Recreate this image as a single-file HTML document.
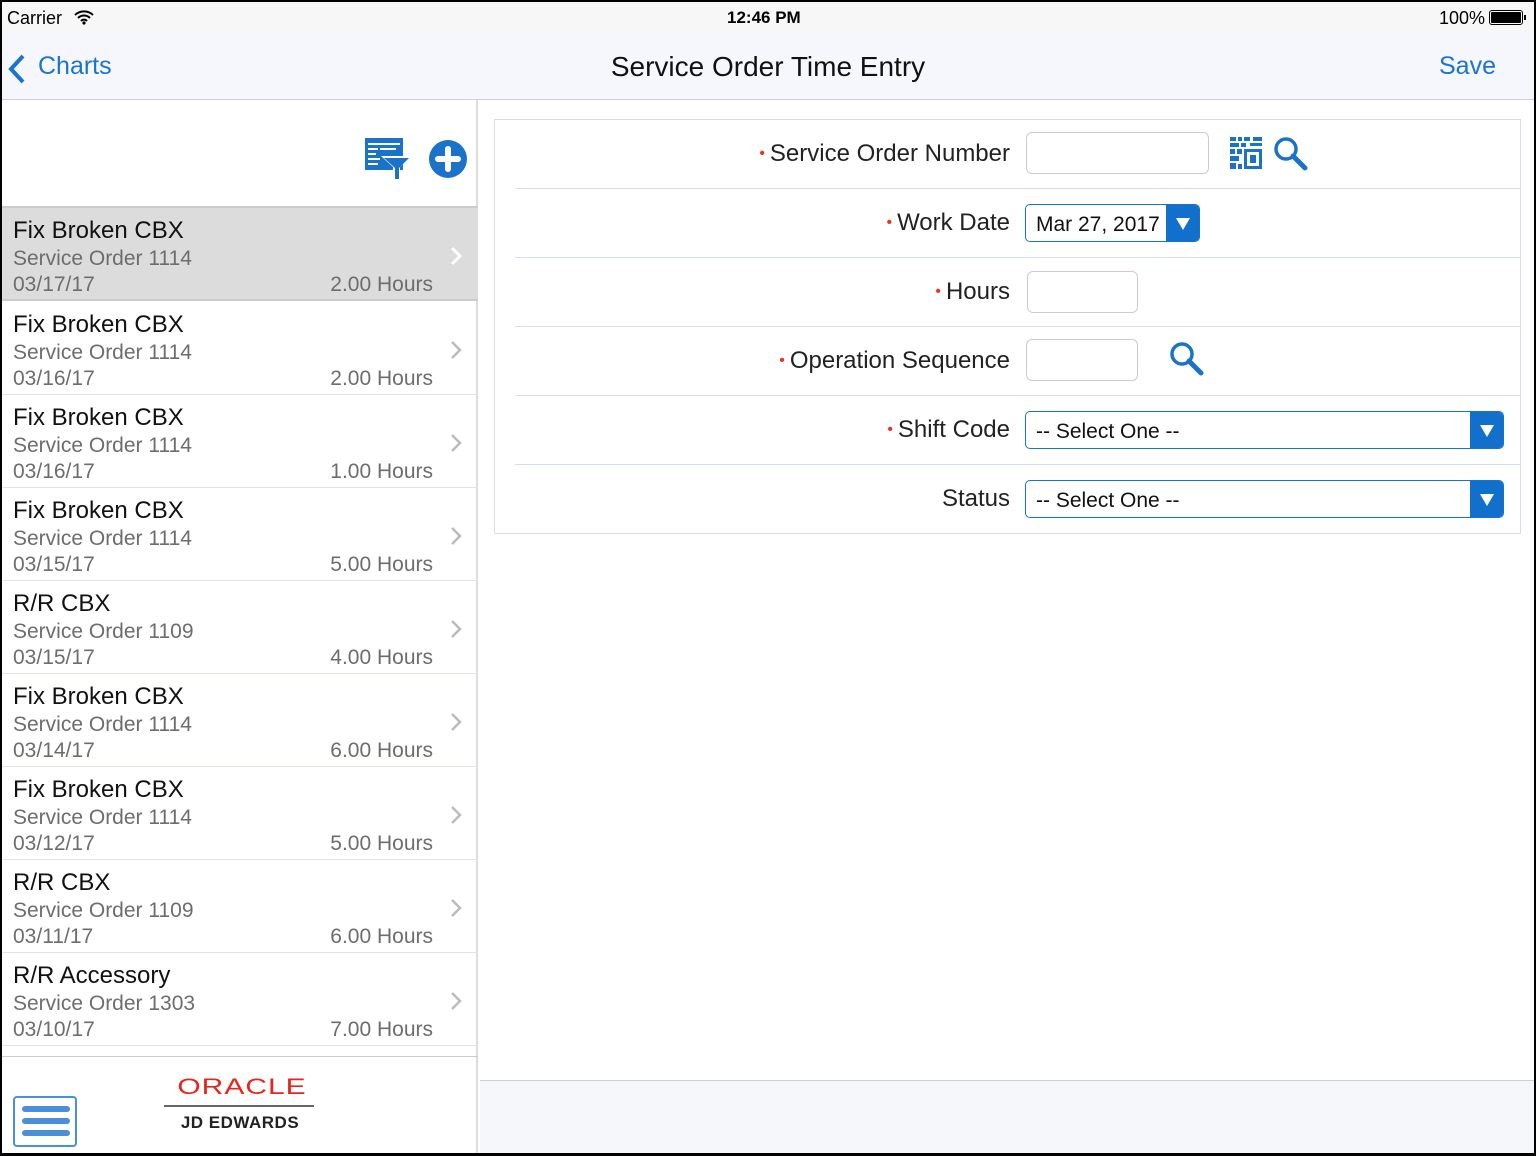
<!DOCTYPE html>
<html><head><meta charset="utf-8"><style>
*{margin:0;padding:0;box-sizing:border-box}
body{width:1536px;height:1156px;background:#000;font-family:"Liberation Sans",sans-serif;position:relative;overflow:hidden}
.scr{position:absolute;left:2px;top:2px;width:1532px;height:1151px;background:#fff;overflow:hidden}
.status{position:absolute;left:0;top:0;width:100%;height:30px;background:#f7f7f7;font-size:18px;color:#000}
.nav{position:absolute;left:0;top:30px;width:100%;height:68px;background:#f5f7fc;border-bottom:1px solid #d0d0d0}
.left{position:absolute;left:0;top:98px;width:476px;height:1053px;border-right:2px solid #ddd;background:#fff}
.row{position:absolute;left:0;width:476px;height:93px;border-bottom:1px solid #dde3ea}
.row .t{position:absolute;left:11px;top:9px;font-size:24px;color:#111}
.row .s{position:absolute;left:11px;top:39px;font-size:21px;color:#6d6d6d}
.row .d{position:absolute;left:11px;top:65px;font-size:21px;color:#6d6d6d}
.row .h{position:absolute;right:45px;top:65px;font-size:21px;color:#6d6d6d}
.row svg{position:absolute;right:16px;top:38px}
.form{position:absolute;left:492px;top:117px;width:1027px;height:415px;border:1px solid #d6dde6}
.fr{position:absolute;left:20px;width:1006px;height:69px;border-bottom:1px solid #d4dde8}
.lab{position:absolute;right:511px;top:20px;font-size:24px;color:#222;white-space:nowrap}
.lab b{color:#e32;font-weight:normal;font-size:16px;margin-right:5px;vertical-align:3px}
.inp{position:absolute;left:511px;border:1px solid #ccc;border-radius:6px;height:42px}
.sel{position:absolute;left:510px;height:38px;border:1px solid #1a73c8;border-radius:5px;font-size:21px;color:#111;padding:8px 10px;overflow:hidden}
.sel .ar{position:absolute;right:0;top:0;width:33px;height:100%;background:#1170cc}
.sel .ar:after{content:"";position:absolute;left:10px;top:13px;border-left:7px solid transparent;border-right:7px solid transparent;border-top:12px solid #fff}
</style></head><body><div class="scr">
<div class="status"><span style="position:absolute;left:5px;top:6px">Carrier</span>
<svg style="position:absolute;left:72px;top:8px" width="20" height="15" viewBox="0 0 20 15"><path d="M1 5a13 13 0 0 1 18 0M4 8a8.5 8.5 0 0 1 12 0M7 11a4 4 0 0 1 6 0" stroke="#000" stroke-width="2" fill="none"/><circle cx="10" cy="13" r="1.6"/></svg>
<span style="position:absolute;left:725px;top:6px;font-weight:bold;font-size:17px">12:46 PM</span>
<span style="position:absolute;left:1437px;top:6px">100%</span>
<div style="position:absolute;left:1487px;top:8px;width:34px;height:15px;border:1px solid #000;border-radius:3px;padding:1px"><div style="width:100%;height:100%;background:#000;border-radius:1px"></div></div><div style="position:absolute;left:1522px;top:13px;width:2px;height:5px;background:#000"></div></div>
<div class="nav"><svg style="position:absolute;left:6px;top:22px" width="18" height="30" viewBox="0 0 18 30"><path d="M15 2L3 15l12 13" stroke="#1a74d0" stroke-width="4" fill="none"/></svg>
<span style="position:absolute;left:36px;top:20px;font-size:25px;color:#1a74d0">Charts</span>
<span style="position:absolute;left:0;width:1532px;text-align:center;top:19px;font-size:28px;color:#111">Service Order Time Entry</span>
<span style="position:absolute;left:1437px;top:20px;font-size:25px;color:#1a74d0">Save</span></div>
<div class="left">
<svg style="position:absolute;left:362px;top:37px" width="48" height="44" viewBox="0 0 48 44"><rect x="1" y="1" width="38" height="32" fill="#1a73c8"/><g fill="#fff"><rect x="4" y="6" width="32" height="2"/><rect x="4" y="11" width="10" height="2"/><rect x="16" y="11" width="16" height="2"/><rect x="4" y="16" width="8" height="2"/><rect x="4" y="21" width="12" height="2"/><rect x="4" y="26" width="10" height="2"/></g><path d="M17 19h30l-11 11v13h-7V30z" fill="#fff"/><path d="M20 21h25l-10 10v11h-4V31z" fill="#1a73c8"/></svg>
<svg style="position:absolute;left:427px;top:40px" width="38" height="38" viewBox="0 0 38 38"><circle cx="19" cy="19" r="19" fill="#1a73c8"/><path d="M19 9v20M9 19h20" stroke="#fff" stroke-width="6" stroke-linecap="round"/></svg>
<div style="position:absolute;left:0;top:106px;width:476px;height:2px;background:#ccc"></div>
<div class="row" style="top:108px;height:93px;background:#dcdcdc;border-bottom:2px solid #ccc"><div class="t">Fix Broken CBX</div><div class="s">Service Order 1114</div><div class="d">03/17/17</div><div class="h">2.00 Hours</div><svg width="12" height="20" viewBox="0 0 12 20"><path d="M2 2l8 8-8 8" stroke="#fff" stroke-width="3" fill="none"/></svg></div>
<div class="row" style="top:202px"><div class="t">Fix Broken CBX</div><div class="s">Service Order 1114</div><div class="d">03/16/17</div><div class="h">2.00 Hours</div><svg width="12" height="20" viewBox="0 0 12 20"><path d="M2 2l8 8-8 8" stroke="#bbb" stroke-width="2.5" fill="none"/></svg></div>
<div class="row" style="top:295px"><div class="t">Fix Broken CBX</div><div class="s">Service Order 1114</div><div class="d">03/16/17</div><div class="h">1.00 Hours</div><svg width="12" height="20" viewBox="0 0 12 20"><path d="M2 2l8 8-8 8" stroke="#bbb" stroke-width="2.5" fill="none"/></svg></div>
<div class="row" style="top:388px"><div class="t">Fix Broken CBX</div><div class="s">Service Order 1114</div><div class="d">03/15/17</div><div class="h">5.00 Hours</div><svg width="12" height="20" viewBox="0 0 12 20"><path d="M2 2l8 8-8 8" stroke="#bbb" stroke-width="2.5" fill="none"/></svg></div>
<div class="row" style="top:481px"><div class="t">R/R CBX</div><div class="s">Service Order 1109</div><div class="d">03/15/17</div><div class="h">4.00 Hours</div><svg width="12" height="20" viewBox="0 0 12 20"><path d="M2 2l8 8-8 8" stroke="#bbb" stroke-width="2.5" fill="none"/></svg></div>
<div class="row" style="top:574px"><div class="t">Fix Broken CBX</div><div class="s">Service Order 1114</div><div class="d">03/14/17</div><div class="h">6.00 Hours</div><svg width="12" height="20" viewBox="0 0 12 20"><path d="M2 2l8 8-8 8" stroke="#bbb" stroke-width="2.5" fill="none"/></svg></div>
<div class="row" style="top:667px"><div class="t">Fix Broken CBX</div><div class="s">Service Order 1114</div><div class="d">03/12/17</div><div class="h">5.00 Hours</div><svg width="12" height="20" viewBox="0 0 12 20"><path d="M2 2l8 8-8 8" stroke="#bbb" stroke-width="2.5" fill="none"/></svg></div>
<div class="row" style="top:760px"><div class="t">R/R CBX</div><div class="s">Service Order 1109</div><div class="d">03/11/17</div><div class="h">6.00 Hours</div><svg width="12" height="20" viewBox="0 0 12 20"><path d="M2 2l8 8-8 8" stroke="#bbb" stroke-width="2.5" fill="none"/></svg></div>
<div class="row" style="top:853px"><div class="t">R/R Accessory</div><div class="s">Service Order 1303</div><div class="d">03/10/17</div><div class="h">7.00 Hours</div><svg width="12" height="20" viewBox="0 0 12 20"><path d="M2 2l8 8-8 8" stroke="#bbb" stroke-width="2.5" fill="none"/></svg></div>
<div style="position:absolute;left:0;top:956px;width:476px;height:1px;background:#ccc"></div>
<div style="position:absolute;left:11px;top:996px;width:64px;height:51px;border:2px solid #4a90d9;border-radius:4px">
<div style="position:absolute;left:7px;top:8px;width:48px;height:6px;border-radius:3px;background:#4a90d9"></div><div style="position:absolute;left:7px;top:20px;width:48px;height:6px;border-radius:3px;background:#4a90d9"></div><div style="position:absolute;left:7px;top:32px;width:48px;height:6px;border-radius:3px;background:#4a90d9"></div></div>
<div style="position:absolute;left:160px;top:972px;width:160px;text-align:center;font-size:30px;color:#e8251a;letter-spacing:1px;transform:scaleY(0.75);line-height:30px">ORACLE</div>
<div style="position:absolute;left:162px;top:1005px;width:150px;height:2px;background:#666"></div>
<div style="position:absolute;left:158px;top:1013px;width:160px;text-align:center;font-size:17px;font-weight:bold;color:#222;letter-spacing:0.5px">JD EDWARDS</div>
</div>
<div style="position:absolute;left:478px;top:1078px;width:1054px;height:73px;background:#f6f7fb;border-top:1px solid #d0d0d0"></div>
<div class="form">
<div class="fr" style="top:0"><div class="lab"><b>•</b>Service Order Number</div><div class="inp" style="top:12px;width:183px"></div>
<svg style="position:absolute;left:715px;top:17px" width="32" height="32" viewBox="0 0 32 32" fill="#1a73c8"><rect x="0" y="0" width="6" height="4"/><rect x="8" y="0" width="4" height="4"/><rect x="14" y="0" width="6" height="4"/><rect x="23" y="0" width="9" height="4"/><rect x="0" y="6" width="9" height="4"/><rect x="11" y="6" width="5" height="4"/><rect x="20" y="6" width="12" height="3"/><rect x="0" y="12" width="5" height="5"/><rect x="7" y="12" width="5" height="5"/><rect x="0" y="19" width="9" height="5"/><rect x="0" y="26" width="6" height="6"/><rect x="8" y="27" width="4" height="5"/><rect x="14" y="12" width="18" height="20"/><rect x="17" y="15" width="12" height="14" fill="#fff"/><rect x="20" y="18" width="6" height="8"/></svg>
<svg style="position:absolute;left:758px;top:16px" width="36" height="36" viewBox="0 0 36 36"><circle cx="13" cy="13" r="10" stroke="#1a73c8" stroke-width="3.5" fill="none"/><path d="M20 20l12 12" stroke="#1a73c8" stroke-width="5" stroke-linecap="round"/></svg></div>
<div class="fr" style="top:69px"><div class="lab"><b>•</b>Work Date</div><div class="sel" style="top:15px;width:175px">Mar 27, 2017<div class="ar"></div></div></div>
<div class="fr" style="top:138px"><div class="lab"><b>•</b>Hours</div><div class="inp" style="top:13px;width:111px;left:512px"></div></div>
<div class="fr" style="top:207px"><div class="lab"><b>•</b>Operation Sequence</div><div class="inp" style="top:12px;width:112px"></div>
<svg style="position:absolute;left:654px;top:14px" width="36" height="36" viewBox="0 0 36 36"><circle cx="13" cy="13" r="10" stroke="#1a73c8" stroke-width="3.5" fill="none"/><path d="M20 20l12 12" stroke="#1a73c8" stroke-width="5" stroke-linecap="round"/></svg></div>
<div class="fr" style="top:276px"><div class="lab"><b>•</b>Shift Code</div><div class="sel" style="top:15px;width:479px">-- Select One --<div class="ar"></div></div></div>
<div class="fr" style="top:345px;border-bottom:none"><div class="lab">Status</div><div class="sel" style="top:15px;width:479px">-- Select One --<div class="ar"></div></div></div>
</div>
</div></body></html>
